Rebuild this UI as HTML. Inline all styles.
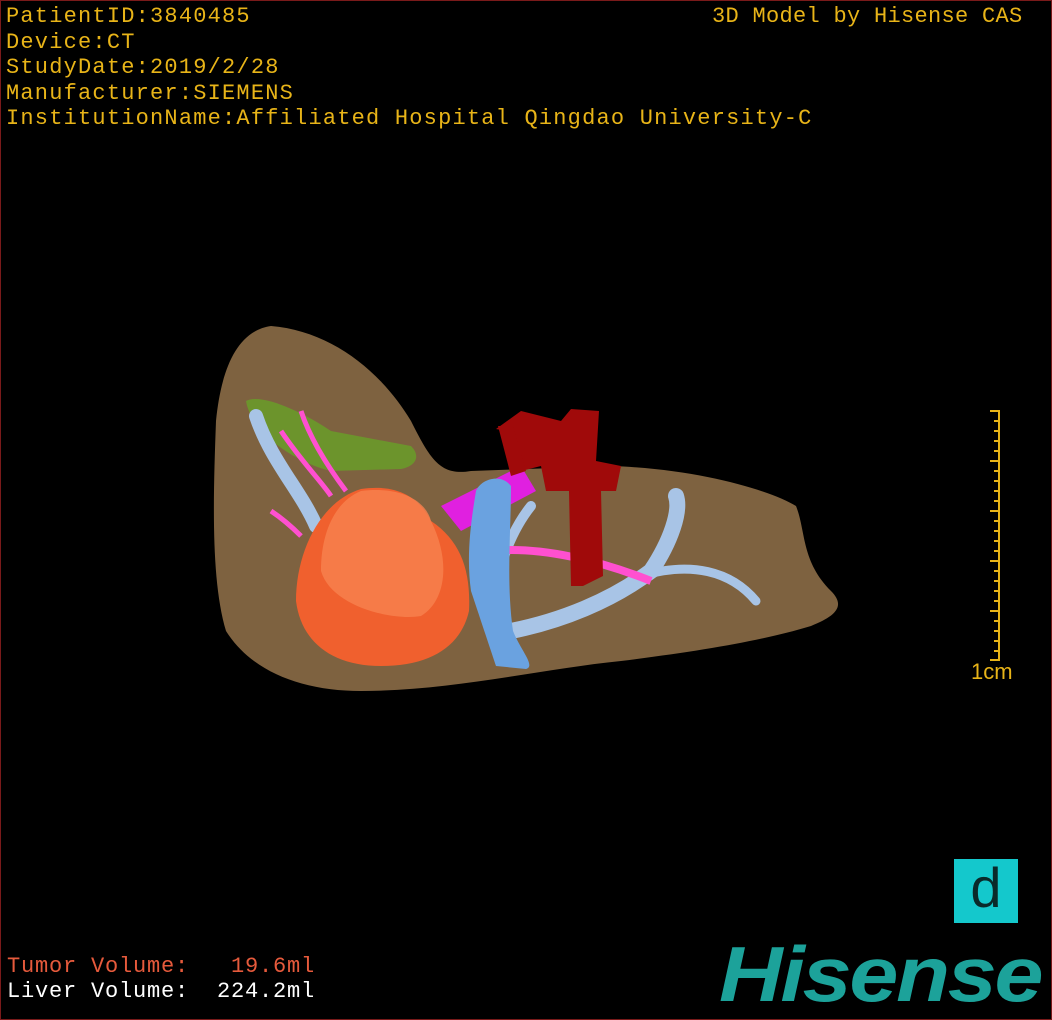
<!DOCTYPE html>
<html><head><meta charset="utf-8"><style>
html,body{margin:0;padding:0;background:#000;}
#c{position:relative;width:1050px;height:1018px;border:1px solid #7a1a1a;overflow:hidden;background:#000;}
.t{position:absolute;color:#e8b418;font-family:"Liberation Mono","Noto Sans CJK SC",monospace;font-size:22px;line-height:25.5px;white-space:pre;letter-spacing:1.2px;}
</style></head><body><div id="c">
<div class="t" style="left:5px;top:3px">PatientID:3840485
Device:CT
StudyDate:2019/2/28
Manufacturer:SIEMENS
InstitutionName:Affiliated Hospital Qingdao University-C</div>
<div class="t" style="left:711px;top:3px;letter-spacing:0.3px">3D Model by Hisense CAS</div>
<div class="t" style="left:6px;top:953px;color:#e65a3c;letter-spacing:0.8px">Tumor Volume:   19.6ml</div>
<div class="t" style="left:6px;top:978px;color:#fff;letter-spacing:0.8px">Liver Volume:  224.2ml</div>
<div class="t" style="left:970px;top:658px;font-family:'Liberation Sans',sans-serif;letter-spacing:0">1cm</div>
<svg width="1050" height="1018" style="position:absolute;left:0;top:0">
<g stroke="#e8b418" stroke-width="2">
<line x1="998" y1="409" x2="998" y2="660"/>
<line x1="989" y1="410" x2="998" y2="410"/><line x1="989" y1="460" x2="998" y2="460"/><line x1="989" y1="510" x2="998" y2="510"/><line x1="989" y1="560" x2="998" y2="560"/><line x1="989" y1="610" x2="998" y2="610"/><line x1="989" y1="659" x2="998" y2="659"/>
<path d="M993 420h5M993 430h5M993 440h5M993 450h5M993 470h5M993 480h5M993 490h5M993 500h5M993 520h5M993 530h5M993 540h5M993 550h5M993 570h5M993 580h5M993 590h5M993 600h5M993 620h5M993 630h5M993 640h5M993 650h5"/>
</g>
<path d="M270 325 C330 330 380 370 410 420 C430 460 440 475 470 470 L610 465 C700 468 770 490 795 505 C805 530 800 560 830 590 C845 605 835 615 810 625 C760 640 700 650 620 660 C540 668 450 690 360 690 C300 690 250 670 225 630 C210 580 212 500 215 420 C220 370 235 330 270 325Z" fill="#7e6240"/>
<path d="M245 400 C260 392 300 410 330 430 L410 445 C420 455 415 465 400 468 L330 470 C290 460 250 430 245 400Z" fill="#6a9a2a" opacity="0.9"/>
<g fill="none" stroke="#a8c4e6" stroke-linecap="round">
<path d="M255 415 C270 460 300 490 315 525" stroke-width="14"/>
<path d="M510 630 C560 620 610 600 650 570 C670 540 680 510 675 495" stroke-width="16"/>
<path d="M640 575 C690 560 730 570 755 600" stroke-width="9"/>
<path d="M490 600 C500 560 510 530 530 505" stroke-width="10"/>
</g>
<g fill="none" stroke="#ff50d0" stroke-width="5">
<path d="M300 410 C310 440 330 470 345 490"/><path d="M280 430 C300 460 320 480 330 495"/><path d="M270 510 C285 520 295 530 300 535"/>
<path d="M490 550 C540 545 600 560 650 580" stroke-width="8"/>
</g>
<path d="M440 505 L520 465 L535 490 L460 530Z" fill="#e020e0"/>
<path d="M430 520 C460 540 470 570 468 610 C460 645 430 665 380 665 C330 665 300 640 295 600 C295 550 320 500 360 488 C400 482 420 500 430 520Z" fill="#f0602e"/>
<path d="M360 490 C400 485 425 500 430 520 C450 560 445 600 420 615 C390 620 330 605 320 570 C320 530 335 500 360 490Z" fill="#f7824f" opacity="0.8"/>
<path d="M475 490 C480 478 500 472 510 485 C510 530 505 580 512 630 C520 650 535 665 525 668 L495 665 C490 650 480 620 470 590 C465 555 470 520 475 490Z" fill="#6aa2e0"/>
<path d="M520 410 L560 420 L570 408 L598 410 L595 460 L620 465 L615 490 L600 490 L602 575 L582 585 L570 585 L568 490 L545 490 L540 465 L520 470 L505 430 L495 428Z" fill="#a00a0a"/>
<path d="M497 425 L512 425 L525 470 L510 475Z" fill="#a00a0a"/>
</svg>
<div style="position:absolute;left:953px;top:858px;width:64px;height:64px;background:#14c8cc;"></div>
<div style="position:absolute;left:953px;top:854px;width:64px;text-align:center;font-size:56px;color:#0a2a2a;font-family:'Liberation Sans',sans-serif;">d</div>
<div style="position:absolute;left:718px;top:934px;font-family:'Liberation Sans',sans-serif;font-weight:bold;font-style:italic;font-size:78px;line-height:78px;color:#1ca29a;letter-spacing:-2px;transform:scaleX(1.13);transform-origin:left;">Hisense</div>
</div></body></html>
